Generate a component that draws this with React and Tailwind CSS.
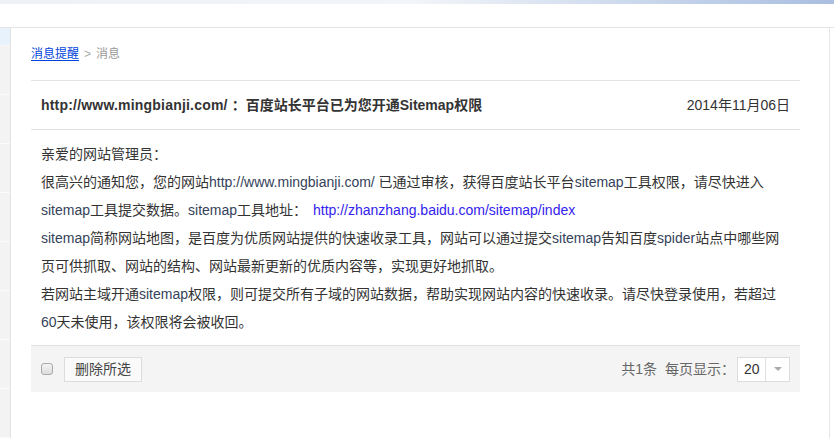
import React from "react";

const font = { fontFamily: '"Liberation Sans", Arial, "Noto Sans CJK SC", sans-serif' };

function Sidebar() {
  const items = [0, 1, 2, 3, 4, 5, 6, 7];
  return (
    <aside className="w-[11px] shrink-0 border-r border-[#e2e2e2] flex flex-col bg-[#f3f3f3]">
      <div className="h-[31px] bg-[#e8f2fc] border-b border-[#f7f7f7]" />
      {items.map((i) => (
        <div key={i} className="h-[49px] shrink-0 border-b border-[#fbfbfb]" />
      ))}
    </aside>
  );
}

export default function App() {
  return (
    <div className="w-[834px] h-[438px] overflow-hidden bg-white text-[#333]" style={font}>
      <div className="h-[4px] bg-gradient-to-r from-[#eef2f7] via-[#f2f5f9] to-[#a9bee0]" />
      <div className="h-[23px]" />
      <div className="flex h-[411px] border-t border-[#e4e4e4]">
        <Sidebar />
        <main className="w-[819px] shrink-0 border-r border-[#e6e6e6] pl-[20px] pr-[29px]">
          <div className="h-[52px] flex items-center pb-[1px] text-[12px]">
            <a href="#" className="text-[#0044dd] underline underline-offset-2">消息提醒</a>
            <span className="mx-[5px] text-[#aaa]">&gt;</span>
            <span className="text-[#999]">消息</span>
          </div>

          <div className="h-[50px] border-t border-b border-[#e3e3e3] flex items-center justify-between px-[10px]">
            <div className="font-bold text-[14px] text-[#333] flex items-center">
              <span className="tracking-[0.2px]">http://www.mingbianji.com/</span>
              <span className="ml-[4px]">：百度站长平台已为您开通Sitemap权限</span>
            </div>
            <div className="text-[14px] text-[#333]">2014年11月06日</div>
          </div>

          <div className="px-[10px] pt-[10px] pb-[9px] text-[14px] leading-[28px] text-[#333] whitespace-nowrap">
            亲爱的网站管理员：<br />
            很高兴的通知您，您的网站<span className="text-[#34425a]">http://www.mingbianji.com/</span> 已通过审核，获得百度站长平台<span className="text-[#34425a]">sitemap</span>工具权限，请尽快进入<br />
            <span className="text-[#34425a]">sitemap</span>工具提交数据。<span className="text-[#34425a]">sitemap</span>工具地址：{" "}
            <a href="#" className="ml-[2px] text-[#3322ee]">http://zhanzhang.baidu.com/sitemap/index</a><br />
            <span className="text-[#34425a]">sitemap</span>简称网站地图，是百度为优质网站提供的快速收录工具，网站可以通过提交<span className="text-[#34425a]">sitemap</span>告知百度<span className="text-[#34425a]">spider</span>站点中哪些网<br />
            页可供抓取、网站的结构、网站最新更新的优质内容等，实现更好地抓取。<br />
            若网站主域开通<span className="text-[#34425a]">sitemap</span>权限，则可提交所有子域的网站数据，帮助实现网站内容的快速收录。请尽快登录使用，若超过<br />
            <span className="text-[#34425a]">60</span>天未使用，该权限将会被收回。
          </div>

          <div className="h-[47px] border-t border-[#e0e0e0] bg-[#f4f4f4] flex items-center justify-between px-[10px]">
            <div className="flex items-center">
              <span className="w-[12px] h-[12px] rounded-[3px] border border-[#a9a9a9] bg-gradient-to-b from-[#f4f4f4] to-[#dcdcdc]" />
              <button className="ml-[11px] h-[25px] w-[78px] border border-[#dcdcdc] bg-[#fafafa] text-[14px] text-[#444] flex items-center justify-center">
                删除所选
              </button>
            </div>
            <div className="flex items-center text-[14px] text-[#666]">
              <span>共1条</span>
              <span className="ml-[8px]">每页显示：</span>
              <div className="ml-[2px] h-[25px] w-[53px] border border-[#dcdcdc] bg-white flex items-center">
                <span className="w-[28px] pl-[6px] text-[14px] text-[#333] border-r border-[#e2e2e2] h-full flex items-center">20</span>
                <span className="flex-1 flex items-center justify-center">
                  <svg width="8" height="4" viewBox="0 0 8 4"><path d="M0 0h8L4 4z" fill="#aaa" /></svg>
                </span>
              </div>
            </div>
          </div>
        </main>
      </div>
    </div>
  );
}
